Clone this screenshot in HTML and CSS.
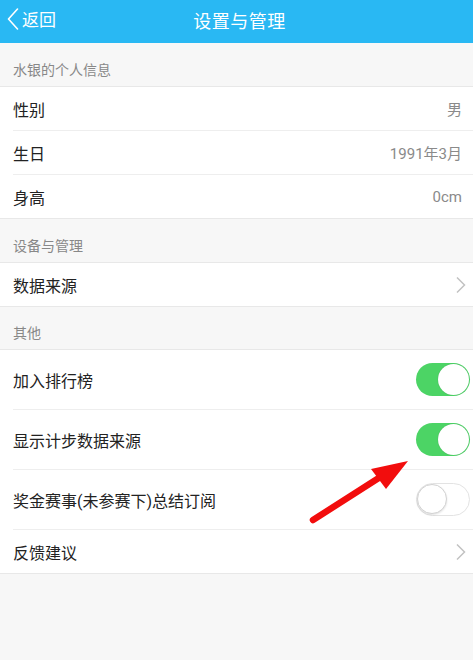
FILE: index.html
```html
<!DOCTYPE html>
<html lang="zh-CN">
<head>
<meta charset="utf-8">
<title>设置与管理</title>
<link rel="stylesheet" href="styles.css">
</head>
<body>
<div class="page">
  <header class="nav">
    <div class="back">
      <svg class="back-icon" width="12" height="22" viewBox="0 0 12 22"><path d="M10.5 1 L1.5 11 L10.5 21" fill="none" stroke="#fff" stroke-width="1.6" stroke-linecap="round" stroke-linejoin="round"/></svg>
      <span>返回</span>
    </div>
    <div class="title">设置与管理</div>
  </header>

  <div class="section-title">水银的个人信息</div>
  <div class="group">
    <div class="row"><span class="label">性别</span><span class="value">男</span></div>
    <div class="row"><span class="label">生日</span><span class="value">1991年3月</span></div>
    <div class="row"><span class="label">身高</span><span class="value">0cm</span></div>
  </div>

  <div class="section-title">设备与管理</div>
  <div class="group">
    <div class="row"><span class="label">数据来源</span><svg class="chev" width="12" height="18" viewBox="0 0 12 18"><path d="M2 1.5 L9.5 9 L2 16.5" fill="none" stroke="#c2c2c2" stroke-width="1.5"/></svg></div>
  </div>

  <div class="section-title short">其他</div>
  <div class="group">
    <div class="row tall"><span class="label">加入排行榜</span><span class="switch on"><span class="knob"></span></span></div>
    <div class="row tall"><span class="label">显示计步数据来源</span><span class="switch on"><span class="knob"></span></span></div>
    <div class="row tall"><span class="label">奖金赛事(未参赛下)总结订阅</span><span class="switch off"><span class="knob"></span></span></div>
    <div class="row"><span class="label">反馈建议</span><svg class="chev" width="12" height="18" viewBox="0 0 12 18"><path d="M2 1.5 L9.5 9 L2 16.5" fill="none" stroke="#c2c2c2" stroke-width="1.5"/></svg></div>
  </div>

  <svg class="arrow" width="473" height="660" viewBox="0 0 473 660">
    <line x1="313" y1="520" x2="385" y2="474" stroke="#f20d0d" stroke-width="6.5" stroke-linecap="round"/>
    <polygon points="408,461 371,469 386,489" fill="#f20d0d"/>
  </svg>
</div>
</body>
</html>
```

FILE: styles.css
```css
* { box-sizing: border-box; }
html, body {
  margin: 0;
  padding: 0;
  background: #f7f7f7;
}
body {
  font-family: "Roboto", "Noto Sans CJK SC", "Noto Sans", sans-serif;
  width: 473px;
  height: 660px;
  overflow: hidden;
}
.page {
  position: relative;
  width: 473px;
  height: 660px;
  background: #f7f7f7;
}
.nav {
  position: relative;
  height: 43px;
  background: #29b8f3;
  color: #fff;
  display: flex;
  align-items: center;
  justify-content: center;
}
.back {
  position: absolute;
  left: 7px;
  top: 0;
  height: 37px;
  display: flex;
  align-items: center;
  gap: 3px;
  font-size: 17px;
}
.back-icon { display: block; }
.title {
  font-size: 18px;
  line-height: 37px;
  height: 37px;
  letter-spacing: 0.5px;
  padding-left: 6px;
}
.section-title {
  height: 43px;
  display: flex;
  align-items: flex-end;
  padding: 0 13px 7px;
  font-size: 14px;
  line-height: 18px;
  color: #888;
}
.section-title.short { height: 42px; }
.group {
  background: #fff;
  border-top: 1px solid #e8e8e8;
  border-bottom: 1px solid #e8e8e8;
  padding-left: 13px;
}
.row {
  height: 44px;
  display: flex;
  align-items: center;
  justify-content: space-between;
  padding-right: 11px;
  border-bottom: 1px solid #eeeeee;
}
.row:last-child {
  border-bottom: none;
  height: 43px;
}
.row.tall {
  height: 60px;
  padding-right: 3px;
}
.label {
  font-size: 16px;
  color: #222;
}
.value {
  font-size: 15px;
  color: #8a8a8a;
}
.chev {
  display: block;
  margin-right: -5px;
}
.switch {
  position: relative;
  width: 54px;
  height: 33px;
  border-radius: 17px;
  display: block;
}
.switch.on {
  background: #4cd465;
}
.switch.off {
  background: #fff;
  border: 1.5px solid #e3e3e3;
}
.knob {
  position: absolute;
  top: 1px;
  width: 31px;
  height: 31px;
  border-radius: 50%;
  background: #fff;
}
.switch.on .knob {
  right: 1px;
  box-shadow: 0 0 1px rgba(0,0,0,0.25);
}
.switch.off .knob {
  left: 0;
  top: 0;
  width: 30px;
  height: 30px;
  border: 1.5px solid #d2d2d2;
  box-shadow: 0 1px 2px rgba(0,0,0,0.12);
}
.arrow {
  position: absolute;
  left: 0;
  top: 0;
  pointer-events: none;
}
```
